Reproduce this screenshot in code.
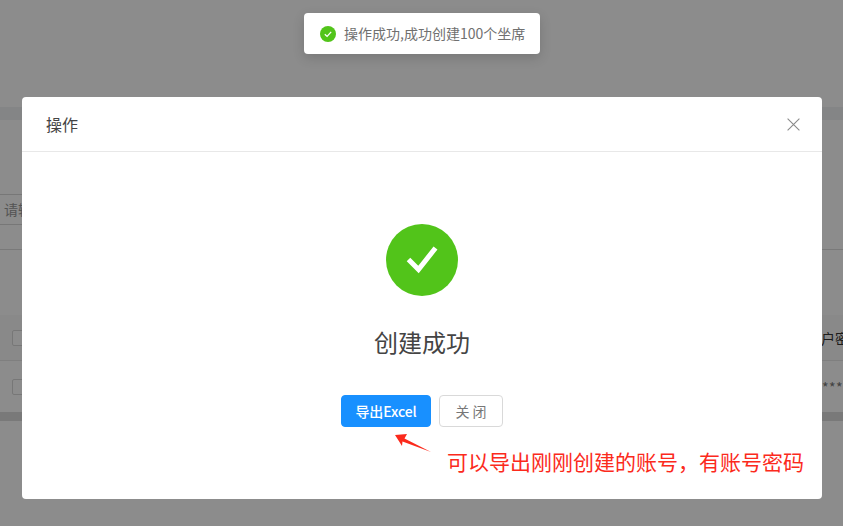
<template>
  <div class="page">
    <div class="backdrop-page">
      <div class="top"></div>
      <div class="band"></div>
      <div class="filter">
        <div class="input">请输入</div>
      </div>
      <div class="table">
        <div class="row head">
          <span class="check"></span>
          <span class="cell account">账户密码</span>
        </div>
        <div class="row body">
          <span class="check"></span>
          <span class="cell stars">******</span>
        </div>
      </div>
      <div class="scroll"></div>
    </div>
    <div class="mask"></div>

    <div class="toast">
      <svg class="toast-icon" viewBox="0 0 16 16">
        <circle cx="8" cy="8" r="8" fill="#52c41a" />
        <path d="M4.8 8.2 7.1 10.4 11.2 5.9" fill="none" stroke="#fff" stroke-width="1.3" />
      </svg>
      <span class="toast-text">操作成功,成功创建100个坐席</span>
    </div>

    <section class="modal">
      <header class="modal-head">
        <span>操作</span>
        <svg class="close" viewBox="0 0 13 13">
          <path d="M.6.6 12.4 12.4M12.4.6.6 12.4" fill="none" stroke="#8a8a8a" stroke-width="1.1" />
        </svg>
      </header>
      <div class="modal-body">
        <svg class="result" viewBox="0 0 72 72">
          <circle cx="36" cy="36" r="36" fill="#52c41a" />
          <path d="M22.5 35.5 32.5 45.5 49.5 24" fill="none" stroke="#fff" stroke-width="5" stroke-linejoin="miter" />
        </svg>
        <h2>创建成功</h2>
        <div class="actions">
          <button class="btn primary">导出Excel</button>
          <button class="btn ghost">关 闭</button>
        </div>
      </div>
      <p class="note">可以导出刚刚创建的账号，有账号密码</p>
      <svg class="arrow" viewBox="0 0 38 22">
        <path d="M1 3 13 2 10.5 6.5 37 20 8.5 9.5 8 14Z" fill="#fb2a1c" />
      </svg>
    </section>
  </div>
</template>

<style scoped>
.page {
  position: relative;
  width: 843px;
  height: 526px;
  overflow: hidden;
  background: #fff;
  font-family: "Noto Sans CJK SC", "Liberation Sans", sans-serif;
}
.backdrop-page {
  display: flex;
  flex-direction: column;
  height: 100%;
  color: #666;
}
.top { height: 107px; }
.band { height: 13px; background: #f0f2f5; }
.filter {
  height: 130px;
  padding-top: 74px;
  box-sizing: border-box;
  border-bottom: 1px solid #ddd;
}
.input {
  width: 100px;
  height: 31px;
  box-sizing: border-box;
  border-top: 1px solid #d9d9d9;
  border-bottom: 1px solid #d9d9d9;
  padding-left: 4px;
  font-size: 14px;
  line-height: 29px;
  color: #999;
}
.table { margin-top: 65px; }
.row {
  display: flex;
  align-items: center;
  justify-content: space-between;
  padding-left: 12px;
  box-sizing: border-box;
  border-bottom: 1px solid #e8e8e8;
  overflow: hidden;
}
.head { height: 46px; background: #fafafa; }
.body { height: 51px; border-bottom: 0; }
.check {
  width: 16px;
  height: 16px;
  box-sizing: border-box;
  border: 1px solid #d9d9d9;
  border-radius: 2px;
  background: #fff;
}
.cell {
  font-size: 14px;
  white-space: nowrap;
}
.account { width: 36px; color: #333; }
.stars {
  width: 21px;
  font-size: 14px;
  letter-spacing: 0.5px;
  color: #777;
}
.scroll { height: 9px; background: #dcdcdc; }
.mask {
  position: absolute;
  inset: 0;
  background: rgba(0, 0, 0, 0.45);
}
.toast {
  position: absolute;
  top: 13px;
  left: 304px;
  width: 236px;
  height: 41px;
  box-sizing: border-box;
  display: flex;
  align-items: center;
  gap: 8px;
  padding-left: 16px;
  background: #fff;
  border-radius: 4px;
  box-shadow: 0 4px 12px rgba(0, 0, 0, 0.15);
  font-size: 14px;
  color: #707070;
  white-space: nowrap;
}
.toast-icon { width: 16px; height: 16px; flex: none; }
.toast-text { margin-top: -1px; }
.modal {
  position: absolute;
  left: 22px;
  top: 97px;
  width: 800px;
  height: 402px;
  background: #fff;
  border-radius: 4px;
}
.modal-head {
  display: flex;
  align-items: center;
  justify-content: space-between;
  height: 55px;
  box-sizing: border-box;
  padding: 0 22px 0 24px;
  border-bottom: 1px solid #e8e8e8;
  font-size: 16px;
  color: #444;
}
.close { width: 13px; height: 13px; }
.modal-body {
  display: flex;
  flex-direction: column;
  align-items: center;
  padding-top: 72px;
}
.result { width: 72px; height: 72px; }
h2 {
  margin: 30px 0 0;
  font-size: 24px;
  line-height: 32px;
  font-weight: 400;
  color: #444;
}
.actions {
  display: flex;
  gap: 8px;
  margin-top: 37px;
}
.btn {
  height: 32px;
  font-family: inherit;
  font-size: 14px;
  border-radius: 4px;
  box-sizing: border-box;
  padding: 0;
}
.primary {
  width: 90px;
  background: #1890ff;
  border: 1px solid #1890ff;
  color: #fff;
  font-weight: 500;
  letter-spacing: -0.1px;
}
.ghost {
  width: 64px;
  background: #fff;
  border: 1px solid #d9d9d9;
  color: #777;
}
.note {
  position: absolute;
  left: 425px;
  top: 349px;
  margin: 0;
  font-size: 21px;
  line-height: 30px;
  color: #fb2a1c;
  white-space: nowrap;
}
.arrow {
  position: absolute;
  left: 372px;
  top: 335px;
  width: 38px;
  height: 22px;
}
</style>
